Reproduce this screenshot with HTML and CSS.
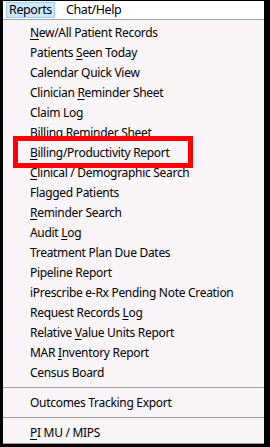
FILE: index.html
```html
<!DOCTYPE html>
<html>
	<head>
		<meta charset="UTF-8">
		<title>Reports</title>
		<link rel="stylesheet" href="styles.css">
	</head>
	<body>
		<div class="frame">
			<div class="menubar">
				<span class="top active">Reports</span>
				<span class="top">Chat/Help</span>
			</div>
			<div class="panel">
				<div class="item"><u>N</u>ew/All Patient Records</div>
				<div class="item">Patients <u>S</u>een Today</div>
				<div class="item">Calendar Quick View</div>
				<div class="item">Clinician <u>R</u>eminder Sheet</div>
				<div class="item">Claim Log</div>
				<div class="item">Billing Reminder Sheet</div>
				<div class="item"><u>B</u>illing/Productivity Report</div>
				<div class="item"><u>C</u>linical / Demographic Search</div>
				<div class="item">Flagged Patients</div>
				<div class="item"><u>R</u>eminder Search</div>
				<div class="item">Audit <u>L</u>og</div>
				<div class="item">Treatment Plan Due Dates</div>
				<div class="item">Pipeline Report</div>
				<div class="item">iPrescribe e-Rx Pending Note Creation</div>
				<div class="item">Request Records <u>L</u>og</div>
				<div class="item">Relative <u>V</u>alue Units Report</div>
				<div class="item">MAR <u>I</u>nventory Report</div>
				<div class="item">Census Board</div>
				<div class="sep"></div>
				<div class="item">Outcomes Tracking Export</div>
				<div class="sep"></div>
				<div class="item"><u>P</u>I MU / MIPS</div>
			</div>
			<div class="mark"></div>
		</div>
	</body>
</html>
```
FILE: styles.css
```css
html,body{
	margin: 0;
	padding: 0;
	background: #000;
}
.frame{
	position: relative;
	width: 270px;
	height: 447px;
	box-sizing: border-box;
	padding: 1px 6px 3px 3px;
	background: #000;
	font-family: "Noto Sans", sans-serif;
	font-size: 12px;
	letter-spacing: -0.3px;
	color: #000;
}
.menubar{
	height: 18px;
	background: #fff;
	display: flex;
	align-items: flex-start;
	padding-top: 1px;
	box-sizing: border-box;
}
.top{
	height: 16px;
	box-sizing: border-box;
	line-height: 14px;
	border: 1px solid transparent;
	font-size: 12.5px;
	letter-spacing: -0.4px;
}
.top.active{
	margin-left: 3px;
	margin-right: 10px;
	padding: 0 2px;
	background: #cce8ff;
	border-color: #99d1ff;
}
.panel{
	height: 425px;
	box-sizing: border-box;
	background: #f8f4f8;
	border-top: 1px solid #a0a0a0;
	border-bottom: 1px solid #a0a0a0;
	padding: 3px 0 0 27px;
}
.item{
	height: 20px;
	line-height: 20px;
	white-space: nowrap;
}
.item u{
	text-underline-offset: 2px;
}
.sep{
	height: 10px;
	position: relative;
}
.sep:after{
	content: "";
	position: absolute;
	left: -27px;
	right: 0;
	top: 4px;
	border-top: 1px solid #a0a0a0;
}
.mark{
	position: absolute;
	left: 13px;
	top: 136px;
	width: 180px;
	height: 32px;
	box-sizing: border-box;
	border: 5px solid #ff0000;
}
```
